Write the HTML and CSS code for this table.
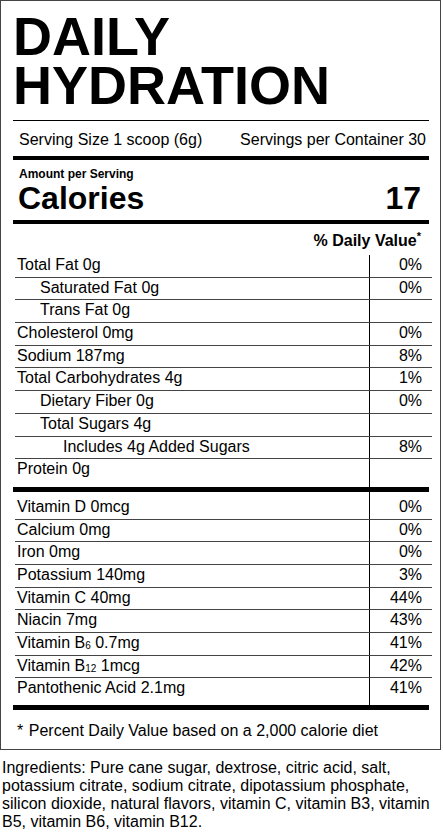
FILE: index.html
```html
<!DOCTYPE html>
<html lang="en">
  <head>
    <meta charset="UTF-8" />
    <meta name="viewport" content="width=device-width, initial-scale=1.0" />
    <title>Daily Hydration Nutrition Facts</title>
    <link rel="stylesheet" href="styles.css">
  </head>
  <body>
    <div class="label">
      <h1 class="title">DAILY<br />HYDRATION</h1>
      <div class="rule-thin"></div>
      <div class="serving">
        <span>Serving Size 1 scoop (6g)</span>
        <span>Servings per Container 30</span>
      </div>
      <div class="rule-thick"></div>
      <div class="amount">Amount per Serving</div>
      <div class="calories">
        <span>Calories</span>
        <span>17</span>
      </div>
      <div class="rule-thick"></div>
      <div class="dv-head">% Daily Value<sup>*</sup></div>

      <!-- macros -->
      <div class="section">
        <div class="row"><span class="name">Total Fat 0g</span><span class="dv">0%</span></div>
        <div class="row"><span class="name l1">Saturated Fat 0g</span><span class="dv">0%</span></div>
        <div class="row"><span class="name l1">Trans Fat 0g</span><span class="dv"></span></div>
        <div class="row"><span class="name">Cholesterol 0mg</span><span class="dv">0%</span></div>
        <div class="row"><span class="name">Sodium 187mg</span><span class="dv">8%</span></div>
        <div class="row"><span class="name">Total Carbohydrates 4g</span><span class="dv">1%</span></div>
        <div class="row"><span class="name l1">Dietary Fiber 0g</span><span class="dv">0%</span></div>
        <div class="row"><span class="name l1">Total Sugars 4g</span><span class="dv"></span></div>
        <div class="row"><span class="name l2">Includes 4g Added Sugars</span><span class="dv">8%</span></div>
        <div class="row row-end protein"><span class="name">Protein 0g</span><span class="dv"></span></div>
      </div>
      <div class="rule-bar"></div>

      <!-- vitamins and minerals -->
      <div class="section">
        <div class="row row-top"><span class="name">Vitamin D 0mcg</span><span class="dv">0%</span></div>
        <div class="row"><span class="name">Calcium 0mg</span><span class="dv">0%</span></div>
        <div class="row"><span class="name">Iron 0mg</span><span class="dv">0%</span></div>
        <div class="row"><span class="name">Potassium 140mg</span><span class="dv">3%</span></div>
        <div class="row"><span class="name">Vitamin C 40mg</span><span class="dv">44%</span></div>
        <div class="row"><span class="name">Niacin 7mg</span><span class="dv">43%</span></div>
        <div class="row"><span class="name">Vitamin B<sub>6</sub> 0.7mg</span><span class="dv">41%</span></div>
        <div class="row"><span class="name">Vitamin B<sub>12</sub> 1mcg</span><span class="dv">42%</span></div>
        <div class="row row-end panto"><span class="name">Pantothenic Acid 2.1mg</span><span class="dv">41%</span></div>
      </div>
      <div class="rule-bar"></div>

      <p class="footnote"><span class="star">*</span>Percent Daily Value based on a 2,000 calorie diet</p>
    </div>

    <p class="ingredients">
      Ingredients: Pure cane sugar, dextrose, citric acid, salt, potassium citrate, sodium citrate,
      dipotassium phosphate, silicon dioxide, natural flavors, vitamin C, vitamin B3, vitamin B5,
      vitamin B6, vitamin B12.
    </p>
  </body>
</html>
```

FILE: styles.css
```css
body {
  margin: 0;
  background-color: #fff;
  color: #000;
  font-family: "Liberation Sans", Arial, sans-serif;
  font-size: 16px;
}

.label {
  width: 441px;
  box-sizing: border-box;
  border: 1px solid #444;
  padding: 11px 11px 0 12px;
}

.title {
  margin: 0;
  font-size: 54px;
  line-height: 49px;
  font-weight: 700;
}

.rule-thin {
  height: 1px;
  margin-top: 10px;
  background-color: #000;
}
.rule-thick {
  height: 4px;
  background-color: #000;
}
.rule-bar {
  height: 5px;
  background-color: #000;
}

.serving {
  display: flex;
  justify-content: space-between;
  line-height: 18px;
  padding: 10px 3px 7px 6px;
}

.amount {
  margin-top: 7px;
  padding-left: 6px;
  font-size: 12px;
  line-height: 14px;
  font-weight: 700;
}

.calories {
  display: flex;
  justify-content: space-between;
  margin: 2px 0 7px;
  padding: 0 8px 0 5px;
  font-size: 32px;
  line-height: 30px;
  font-weight: 700;
}

.dv-head {
  text-align: right;
  font-weight: 700;
  line-height: 18px;
  padding: 8px 8px 5px 0;
}
.dv-head sup {
  font-size: 11px;
  line-height: 0;
  vertical-align: 6px;
}

/* table rows */
.row {
  display: flex;
  height: 21.7px;
  margin: 0 -3px 0 2px;
  line-height: 20px;
  border-bottom: 1px solid #444;
}
.row .name {
  flex: 1;
  padding-left: 2px;
}
.row .dv {
  width: 52px;
  padding-right: 10px;
  text-align: right;
  border-left: 1px solid #000;
}
.row .l1 {
  padding-left: 25px;
}
.row .l2 {
  padding-left: 48px;
}
.row-end {
  border-bottom: 0;
}
.protein {
  height: 27.7px;
}
.panto {
  height: 26.4px;
}
.row-top {
  height: 26.7px;
}
.row-top .name,
.row-top .dv {
  padding-top: 5px;
}

.row sub {
  font-size: 10px;
  line-height: 0;
  vertical-align: -1px;
}

.footnote {
  margin: 12px 0 0;
  padding: 0 0 9px 4px;
  line-height: 18px;
}
.star {
  margin-right: 5.5px;
}

.ingredients {
  margin: 9.5px 0 0;
  padding: 0 2px 0 2px;
  line-height: 18px;
}
```
